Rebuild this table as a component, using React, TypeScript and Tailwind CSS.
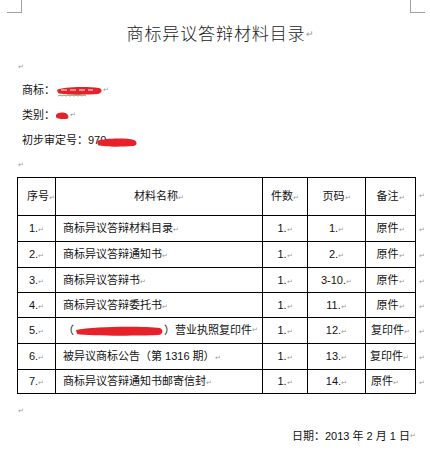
const ROWS = [
  { no: "1.", name: "商标异议答辩材料目录", count: "1.", page: "1.", note: "原件", noteAlign: "text-center" },
  { no: "2.", name: "商标异议答辩通知书", count: "1.", page: "2.", note: "原件", noteAlign: "text-center" },
  { no: "3.", name: "商标异议答辩书", count: "1.", page: "3-10.", note: "原件", noteAlign: "text-center" },
  { no: "4.", name: "商标异议答辩委托书", count: "1.", page: "11.", note: "原件", noteAlign: "text-center" },
  { no: "5.", name: "", count: "1.", page: "12.", note: "复印件", noteAlign: "text-center" },
  { no: "6.", name: "被异议商标公告（第 1316 期）", count: "1.", page: "13.", note: "复印件", noteAlign: "text-left pl-[4px]" },
  { no: "7.", name: "商标异议答辩通知书邮寄信封", count: "1.", page: "14.", note: "原件", noteAlign: "text-left pl-[5px]" },
];

const ROW_HEIGHTS = ["h-[26px]", "h-[26px]", "h-[25px]", "h-[25px]", "h-[26px]", "h-[26px]", "h-[24px]"];

const Mark = () => <span className="text-[7px] text-[#9a9a9a] align-baseline">↵</span>;

const Scribble = ({ width, height, children }: { width: number; height: number; children: React.ReactNode }) => (
  <svg width={width} height={height} viewBox={`0 0 ${width} ${height}`} className="inline-block align-middle">
    {children}
  </svg>
);

export default function App() {
  return (
    <div className="relative w-[430px] h-[450px] overflow-hidden bg-white text-[11px] text-[#111] font-['Liberation_Sans','Noto_Sans_CJK_SC',sans-serif]">
      {/* page corner marks */}
      <div className="absolute left-[7px] top-0 h-[13px] w-[15px] border-r border-b border-[#a0a0a0]" />
      <div className="absolute left-[410px] top-0 h-[13px] w-[15px] border-l border-b border-[#a0a0a0]" />

      <div className="mt-[22px] h-[22px] flex items-center justify-center pl-[10px]">
        <span className="text-[17px] tracking-[0.9px] font-light font-['Noto_Sans_CJK_SC',sans-serif] text-[#1a1a1a]">
          商标异议答辩材料目录
        </span>
        <span className="text-[9px] text-[#9a9a9a] mt-[4px]">↵</span>
      </div>

      <div className="h-[34px] pt-[12px] pl-[18px] flex items-center"><Mark /></div>

      <div className="h-[25px] pl-[22px] flex items-center">
        <span>商标：</span>
        <Scribble width={48} height={13}>
          <path d="M2 6 C6 3, 30 2, 44 4 C48 5, 47 9, 43 10 C30 11, 8 11, 3 9 Z" fill="#e8202a" />
          <path d="M6 6 H12 M15 6 H21 M24 6 H30 M33 6 H38" stroke="#fff" strokeWidth="1" />
          <path d="M3 12 l2 -1 l2 1 l2 -1 l2 1 l2 -1 l2 1 l2 -1 l2 1 l2 -1 l2 1 l2 -1 l2 1 l2 -1 l2 1" stroke="#3a9a3a" strokeWidth="0.8" fill="none" />
        </Scribble>
        <Mark />
      </div>

      <div className="h-[25px] pl-[22px] flex items-center">
        <span>类别：</span>
        <Scribble width={15} height={10}>
          <path d="M1 4 C3 1, 9 1, 12 3 C14 5, 14 8, 11 8 C7 8, 2 8, 1 6 Z" fill="#e8202a" />
        </Scribble>
        <Mark />
      </div>

      <div className="h-[25px] pl-[22px] flex items-center">
        <span>初步审定号：</span>
        <span className="relative">
          <span>970</span>
          <span className="absolute left-[8px] top-[1px]">
            <Scribble width={42} height={11}>
              <path d="M1 4 C10 1, 30 1, 38 3 C42 5, 41 9, 37 9 C25 10, 8 10, 2 8 Z" fill="#e8202a" />
            </Scribble>
          </span>
        </span>
      </div>

      <div className="h-[24px] pl-[18px] flex items-center"><Mark /></div>

      <div className="pl-[17px] flex">
        <table className="border-collapse table-fixed">
          <colgroup>
            <col className="w-[38px]" />
            <col className="w-[207px]" />
            <col className="w-[45px]" />
            <col className="w-[58px]" />
            <col className="w-[50px]" />
            <col className="w-[14px]" />
          </colgroup>
          <tbody>
            <tr className="h-[38px]">
              <td className="border border-black pl-[9px] whitespace-nowrap">序号<Mark /></td>
              <td className="border border-black text-center">材料名称<Mark /></td>
              <td className="border border-black text-center">件数<Mark /></td>
              <td className="border border-black text-center">页码<Mark /></td>
              <td className="border border-black text-center">备注<Mark /></td>
              <td className="pl-[3px] align-top pt-[8px]"><Mark /></td>
            </tr>
            {ROWS.map((row, i) => (
              <tr key={row.no} className={ROW_HEIGHTS[i]}>
                <td className="border border-black text-center">{row.no}<Mark /></td>
                <td className="border border-black pl-[7px] whitespace-nowrap">
                  {row.name ? (
                    <>
                      {row.name}
                      <Mark />
                    </>
                  ) : (
                    <span className="inline-flex items-center">
                      （
                      <Scribble width={90} height={12}>
                        <path d="M2 5 C20 1, 70 1, 86 3 C90 5, 89 10, 84 10 C60 11, 15 11, 3 9 Z" fill="#e8202a" />
                      </Scribble>
                      ）营业执照复印件
                      <Mark />
                    </span>
                  )}
                </td>
                <td className="border border-black text-center">{row.count}<Mark /></td>
                <td className="border border-black text-center">{row.page}<Mark /></td>
                <td className={`border border-black whitespace-nowrap ${row.noteAlign}`}>
                  {row.note}
                  <Mark />
                </td>
                <td className="pl-[3px]"><Mark /></td>
              </tr>
            ))}
          </tbody>
        </table>
      </div>

      <div className="h-[34px] pl-[18px] flex items-center"><Mark /></div>

      <div className="h-[16px] pr-[14px] flex items-center justify-end">
        <span>日期：2013 年 2 月 1 日</span>
        <Mark />
      </div>
    </div>
  );
}
